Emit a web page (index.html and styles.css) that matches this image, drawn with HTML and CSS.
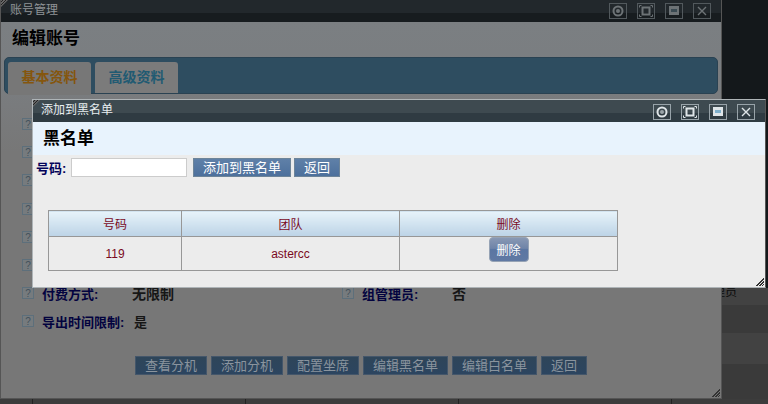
FILE: index.html
```html
<!DOCTYPE html>
<html>
<head>
    <meta charset="UTF-8">
    <meta name="viewport" content="width=device-width, initial-scale=1.0">
    <title>账号管理</title>
    <link rel="stylesheet" href="styles.css">
</head>
<body>
    <div class="desktop">
        <div class="behind">
            <div class="behind-top"></div>
            <div class="behind-row first"><span class="behind-text">管理员</span></div>
            <div class="behind-row alt"></div>
            <div class="behind-row tall"></div>
            <div class="behind-row alt wide"></div>
            <div class="behind-foot">
                <span class="foot-cell"></span>
                <span class="foot-cell"></span>
                <span class="foot-cell"></span>
                <span class="foot-cell"></span>
            </div>
        </div>

        <!-- back window -->
        <div class="window back">
            <div class="title-bar">
                <span class="corner"></span>
                <span class="title-text">账号管理</span>
                <div class="win-buttons">
                    <svg class="win-btn" viewBox="0 0 16 14"><circle cx="8" cy="7" r="4.5" fill="none" stroke="currentColor" stroke-width="2"/><circle cx="8" cy="7" r="2" fill="currentColor"/></svg>
                    <svg class="win-btn" viewBox="0 0 16 14"><rect x="4.5" y="3.5" width="7" height="7" fill="none" stroke="currentColor" stroke-width="2"/><path d="M1.5 3.5v-2h2M14.5 3.5v-2h-2M1.5 10.5v2h2M14.5 10.5v2h-2" stroke="currentColor" fill="none"/></svg>
                    <svg class="win-btn" viewBox="0 0 16 14"><rect x="3" y="2" width="10" height="9" fill="currentColor"/><rect x="5" y="5" width="6" height="3" fill="#3a4a52"/></svg>
                    <svg class="win-btn" viewBox="0 0 16 14"><path d="M4 3l8 8M12 3l-8 8" stroke="currentColor" stroke-width="1.4" fill="none"/></svg>
                </div>
            </div>
            <div class="back-body">
                <h2 class="page-title">编辑账号</h2>
                <div class="tab-bar">
                    <a class="tab active">基本资料</a>
                    <a class="tab">高级资料</a>
                </div>
                <div class="fields">
                    <div class="field-row"><span class="help">?</span></div>
                    <div class="field-row"><span class="help">?</span></div>
                    <div class="field-row"><span class="help">?</span></div>
                    <div class="field-row"><span class="help">?</span></div>
                    <div class="field-row"><span class="help">?</span></div>
                    <div class="field-row"><span class="help">?</span></div>
                    <div class="field-row">
                        <span class="help">?</span><b class="label">付费方式:</b><b class="value">无限制</b>
                        <span class="help second">?</span><b class="label">组管理员:</b><b class="value">否</b>
                    </div>
                    <div class="field-row">
                        <span class="help">?</span><b class="label">导出时间限制:</b><b class="value short">是</b>
                    </div>
                </div>
                <div class="back-actions">
                    <button class="btn">查看分机</button>
                    <button class="btn">添加分机</button>
                    <button class="btn">配置坐席</button>
                    <button class="btn">编辑黑名单</button>
                    <button class="btn">编辑白名单</button>
                    <button class="btn">返回</button>
                </div>
            </div>
            <span class="grip"></span>
        </div>

        <!-- front window -->
        <div class="window front">
            <div class="title-bar">
                <span class="corner"></span>
                <span class="title-text">添加到黑名单</span>
                <div class="win-buttons">
                    <svg class="win-btn" viewBox="0 0 16 14"><circle cx="8" cy="7" r="4.5" fill="none" stroke="currentColor" stroke-width="2"/><circle cx="8" cy="7" r="2" fill="#9aa3a8"/></svg>
                    <svg class="win-btn" viewBox="0 0 16 14"><rect x="4.5" y="3.5" width="7" height="7" fill="none" stroke="currentColor" stroke-width="2"/><path d="M1.5 3.5v-2h2M14.5 3.5v-2h-2M1.5 10.5v2h2M14.5 10.5v2h-2" stroke="currentColor" fill="none"/></svg>
                    <svg class="win-btn" viewBox="0 0 16 14"><rect x="3" y="2" width="10" height="9" fill="currentColor"/><rect x="5" y="5" width="6" height="3" fill="#7fb0cc"/></svg>
                    <svg class="win-btn" viewBox="0 0 16 14"><path d="M4 3l8 8M12 3l-8 8" stroke="currentColor" stroke-width="1.4" fill="none"/></svg>
                </div>
            </div>
            <h2 class="front-head">黑名单</h2>
            <div class="front-body">
                <form class="add-form">
                    <b class="label">号码:</b>
                    <input class="num-input" type="text">
                    <button class="btn" type="button">添加到黑名单</button>
                    <button class="btn back-btn" type="button">返回</button>
                </form>
                <table class="list">
                    <tr><th class="col-a">号码</th><th class="col-b">团队</th><th>删除</th></tr>
                    <tr><td>119</td><td>astercc</td><td class="del-cell"><button class="del-btn" type="button">删除</button></td></tr>
                </table>
            </div>
            <span class="grip"></span>
        </div>
    </div>
</body>
</html>
```

FILE: styles.css
```css
* {
    box-sizing: border-box;
}
html, body {
    margin: 0;
    padding: 0;
    height: 100%;
    overflow: hidden;
}
body {
    font-family: "Liberation Sans", "Noto Sans CJK SC", sans-serif;
    font-size: 12px;
    background-color: #3b3b3b;
}
.desktop {
    position: relative;
    width: 768px;
    height: 404px;
    overflow: hidden;
}

/* page underneath the two windows */
.behind {
    display: flex;
    flex-direction: column;
    height: 100%;
}
.behind-top {
    height: 288px;
    background-color: #14181b;
}
.behind-row {
    height: 28px;
    background-color: #424242;
}
.behind-row.first {
    height: 17px;
    padding-left: 701px;
    color: #0c0c0c;
}
.behind-text {
    display: block;
    margin-top: -6px;
}
.behind-row.alt {
    background-color: #3a3a3a;
}
.behind-row.tall {
    height: 31px;
}
.behind-row.wide {
    height: 35px;
}
.behind-foot {
    display: flex;
    flex: 1;
    padding-left: 32px;
    background-color: #3c3c3c;
}
.foot-cell {
    flex: none;
    width: 213px;
    border-left: 1px solid #222;
}

.window {
    position: absolute;
    display: flex;
    flex-direction: column;
}
.window.back {
    left: 0;
    top: 0;
    width: 722px;
    height: 399px;
    border: 1px solid #555;
    border-top: 0;
    background: #777;
}
.window.front {
    left: 32px;
    top: 99px;
    width: 734px;
    height: 189px;
    border: 1px solid #aeb4b7;
    border-right-color: #555;
    background: #ececec;
}
.title-bar {
    position: relative;
    display: flex;
    justify-content: space-between;
    flex: none;
    height: 22px;
    padding: 0 10px 0 9px;
    background: linear-gradient(#22282c 0, #22282c 60%, #171c1f 60%, #171c1f 100%);
    color: #8f9396;
}
.front .title-bar {
    background: linear-gradient(#3e4a50 0, #3e4a50 60%, #2f3b42 60%, #2f3b42 100%);
    color: #e9eef1;
    padding-left: 8px;
}
.corner {
    position: absolute;
    left: 0;
    top: 0;
    width: 7px;
    height: 7px;
    background: repeating-linear-gradient(135deg, #666 0, #666 1px, #222 1px, #222 2px);
    clip-path: polygon(0 0, 100% 0, 0 100%);
}
.title-text {
    font-size: 12px;
    line-height: 20px;
}
.front .title-text {
    line-height: 21px;
}
.win-buttons {
    display: flex;
    gap: 10px;
    padding-top: 3px;
}
.front .win-buttons {
    padding-top: 4px;
}
.win-btn {
    width: 18px;
    height: 16px;
    border: 1px solid #52595d;
    color: #6d7376;
}
.front .win-btn {
    border-color: #98a3a9;
    color: #dfe5e8;
}

.back-body {
    flex: 1;
    background: linear-gradient(#7b7f82 0, #7a7d80 60px, #777 130px);
}
.page-title {
    margin: 0;
    height: 35px;
    padding: 6px 0 0 11px;
    font-size: 17px;
    line-height: 22px;
    color: #000;
}
.tab-bar {
    display: flex;
    gap: 4px;
    height: 37px;
    margin: 0 3px 0 3px;
    padding: 4px 0 0 3px;
    background-color: #2e4d60;
    border: 1px solid #2a4252;
    border-radius: 5px;
}
.tab {
    width: 83px;
    height: 31px;
    line-height: 31px;
    text-align: center;
    font-size: 14px;
    font-weight: bold;
    color: #215a72;
    background-color: #7b7b7b;
    border-radius: 3px 3px 0 0;
}
.tab.active {
    height: 33px;
    color: #85560e;
    background-color: #777;
}
.fields {
    padding: 16px 0 0 21px;
}
.field-row {
    display: flex;
    align-items: center;
    height: 28.2px;
}
.help {
    flex: none;
    width: 12px;
    height: 12px;
    line-height: 11px;
    text-align: center;
    font-size: 10px;
    color: #44525c;
    background-color: #767b7e;
    border: 1px solid #5d6f7b;
}
.help.second {
    margin-left: 170px;
}
.label {
    margin-left: 8px;
    font-size: 13px;
    color: #03033f;
    white-space: nowrap;
}
.field-row .label {
    width: 90px;
}
.value {
    width: 40px;
    font-size: 14px;
    color: #161616;
    white-space: nowrap;
}
.value.short {
    margin-left: 2px;
    font-size: 13px;
}
.back-actions {
    display: flex;
    gap: 4px;
    padding: 20px 0 0 134px;
}
.btn {
    height: 19px;
    padding: 0 9px;
    font-family: inherit;
    font-size: 13px;
    line-height: 17px;
    color: #fff;
    background: linear-gradient(#5f80a8, #4d709c);
    border: 1px solid #6d8499;
}
.back-actions .btn {
    color: #8a949e;
    background: linear-gradient(#2e4559, #2c4560);
    border-color: #44566a;
}
.grip {
    position: absolute;
    right: 1px;
    bottom: 1px;
    width: 9px;
    height: 9px;
    background: repeating-linear-gradient(135deg, transparent 0, transparent 1px, #333 1px, #333 2px);
    clip-path: polygon(100% 0, 100% 100%, 0 100%);
}

.front-head {
    margin: 0;
    flex: none;
    height: 33px;
    padding-left: 10px;
    font-size: 17px;
    line-height: 34px;
    color: #000;
    background-color: #e8f3fd;
}
.front-body {
    flex: 1;
}
.add-form {
    display: flex;
    align-items: center;
    gap: 6px;
    height: 25px;
    padding: 0 0 0 3px;
    margin: 0;
}
.add-form .label {
    margin: 0;
    width: 29px;
    color: #03035a;
}
.num-input {
    width: 116px;
    height: 19px;
    background: #fff;
    border: 1px solid #ccc;
}
.back-btn {
    margin-left: -3px;
}
.list {
    border-collapse: collapse;
    width: 570px;
    margin: 30px 0 0 15px;
    color: #7a0a1e;
}
.list th, .list td {
    border: 1px solid #979797;
    text-align: center;
    font-weight: normal;
    font-size: 12px;
    padding: 0;
}
.list th {
    height: 26px;
    background: linear-gradient(#e7f3fa, #bcd3e6);
}
.list td {
    height: 34px;
}
.list .del-cell {
    vertical-align: top;
}
.col-a {
    width: 133px;
}
.col-b {
    width: 218px;
}
.del-btn {
    display: block;
    margin: 0 auto;
    width: 40px;
    height: 25px;
    font-family: inherit;
    font-size: 12px;
    color: #fff;
    background: linear-gradient(#8898b4, #6f84a8 45%, #5b76a2 50%, #6079a3);
    border: 1px solid #96a3b5;
    border-radius: 4px;
    padding: 0;
}
```
